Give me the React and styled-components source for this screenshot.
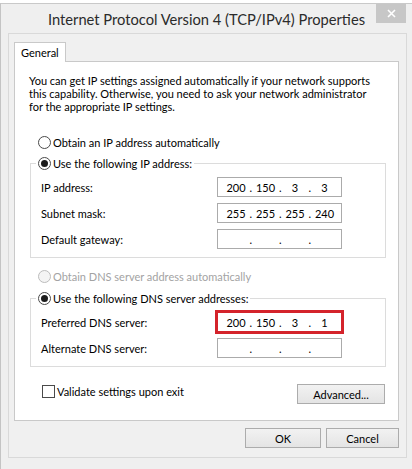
import React from "react";
import styled, { createGlobalStyle } from "styled-components";

const GlobalStyle = createGlobalStyle`
  html, body {
    margin: 0;
    padding: 0;
    background: #ffffff;
  }
  body {
    font-family: Lato, "Liberation Sans", sans-serif;
    font-size: 11px;
    color: #000;
  }
`;

const Window = styled.div`
  box-sizing: border-box;
  width: 412px;
  height: 466px;
  margin-top: 3px;
  background: #efefef;
  border-top: 1px solid #c9c9c9;
  border-left: 1px solid #c4c4c4;
  display: flex;
  flex-direction: column;
`;

const TitleBar = styled.div`
  height: 29px;
  display: grid;
  grid-template-columns: 1fr auto 1fr;
  align-items: center;
`;

const Title = styled.div`
  grid-column: 2;
  font-size: 14.7px;
  color: #2b2b2b;
  white-space: nowrap;
  padding-top: 1px;
`;

const CloseButton = styled.div`
  grid-column: 3;
  justify-self: end;
  align-self: start;
  width: 30px;
  height: 19px;
  margin-right: 6px;
  background: #c7c7c7;
  display: flex;
  align-items: center;
  justify-content: center;
`;

const Client = styled.div`
  box-sizing: border-box;
  height: 425px;
  margin: 0 5px 0 7px;
  padding: 8px 7px 0 5px;
  background: #f0f0f0;
  border: 1px solid #d9d9d9;
  display: flex;
  flex-direction: column;
`;

const TabStrip = styled.div`
  display: flex;
`;

const Tab = styled.div`
  box-sizing: border-box;
  height: 20px;
  margin-bottom: -1px;
  padding: 3px 6px 0 6px;
  background: #fff;
  border: 1px solid #c9c9c9;
  border-bottom: none;
  position: relative;
  z-index: 1;
`;

const Panel = styled.div`
  box-sizing: border-box;
  height: 360px;
  background: #fff;
  border: 1px solid #c9c9c9;
  display: flex;
  flex-direction: column;
`;

const Intro = styled.p`
  margin: 0;
  padding: 12px 14px 0 14px;
  line-height: 13px;
`;

const OptionRow = styled.label`
  display: flex;
  align-items: center;
  height: 16px;
  margin: ${(p) => p.$mt || 0}px 0 0 ${(p) => p.$ml || 0}px;
  color: ${(p) => (p.$disabled ? "#a3a3a3" : "#000")};
  gap: 2px;
  white-space: nowrap;
`;

const Radio = styled.span`
  box-sizing: border-box;
  width: 13px;
  height: 13px;
  border-radius: 50%;
  border: 1px solid ${(p) => (p.$disabled ? "#bcbcbc" : "#4a4a4a")};
  background: ${(p) => (p.$disabled ? "#f4f4f4" : "#fff")};
  display: flex;
  align-items: center;
  justify-content: center;
  flex: none;

  &::after {
    content: "";
    width: 7px;
    height: 7px;
    border-radius: 50%;
    background: #1b1b1b;
    display: ${(p) => (p.$checked ? "block" : "none")};
  }
`;

const CheckBox = styled.span`
  box-sizing: border-box;
  width: 13px;
  height: 13px;
  border: 1px solid #4a4a4a;
  background: #fff;
  flex: none;
`;

const Group = styled.fieldset`
  box-sizing: border-box;
  width: 356px;
  margin: ${(p) => p.$mt || 0}px 0 0 15px;
  padding: 0;
  border: 1px solid #dcdcdc;
  min-inline-size: 0;
`;

const Legend = styled.legend`
  margin-left: 5px;
  padding: 0 2px;
`;

const Fields = styled.div`
  display: grid;
  grid-template-columns: 1fr 125px;
  row-gap: 6px;
  align-items: center;
  padding: 6px 43px 8px 10px;
`;

const FieldLabel = styled.span`
  white-space: nowrap;
`;

const IpBox = styled.div`
  box-sizing: border-box;
  height: 20px;
  padding-left: 5px;
  background: #fff;
  border: 1px solid ${(p) => (p.$marked ? "#d4232b" : "#ababab")};
  box-shadow: ${(p) => (p.$marked ? "0 0 0 2px #d4232b" : "none")};
  display: flex;
  align-items: center;
`;

const Octet = styled.span`
  width: 26px;
  text-align: center;
  flex: none;
`;

const Dot = styled.span`
  width: 3.5px;
  flex: none;
  display: flex;
  justify-content: center;
`;

const Footer = styled.div`
  display: flex;
  justify-content: space-between;
  align-items: flex-start;
  margin-top: 16px;
  padding: 0 13px 0 27px;
`;

const Button = styled.div`
  box-sizing: border-box;
  width: ${(p) => p.$w}px;
  height: 20px;
  margin-top: ${(p) => p.$mt || 0}px;
  background: linear-gradient(#f2f2f2, #e4e4e4);
  border: 1px solid #acacac;
  display: flex;
  align-items: center;
  justify-content: center;
  flex: none;
`;

const ButtonBar = styled.div`
  display: flex;
  justify-content: flex-end;
  gap: 5px;
  margin-top: 7px;
`;

function IpField({ value, marked }) {
  const parts = value ? value.split(".") : ["", "", "", ""];
  return (
    <IpBox $marked={marked}>
      {parts.map((p, i) => (
        <React.Fragment key={i}>
          {i > 0 && <Dot>.</Dot>}
          <Octet>{p}</Octet>
        </React.Fragment>
      ))}
    </IpBox>
  );
}

export default function App() {
  return (
    <>
      <GlobalStyle />
      <Window>
        <TitleBar>
          <Title>Internet Protocol Version 4 (TCP/IPv4) Properties</Title>
          <CloseButton>
            <svg width="9" height="9" viewBox="0 0 9 9">
              <path d="M1 1L8 8M8 1L1 8" stroke="#fff" strokeWidth="1.6" />
            </svg>
          </CloseButton>
        </TitleBar>
        <Client>
          <TabStrip>
            <Tab>General</Tab>
          </TabStrip>
          <Panel>
            <Intro>
              You can get IP settings assigned automatically if your network supports
              <br />
              this capability. Otherwise, you need to ask your network administrator
              <br />
              for the appropriate IP settings.
            </Intro>

            <OptionRow $mt={21} $ml={23}>
              <Radio />
              Obtain an IP address automatically
            </OptionRow>

            <Group $mt={5}>
              <Legend>
                <OptionRow>
                  <Radio $checked />
                  Use the following IP address:
                </OptionRow>
              </Legend>
              <Fields>
                <FieldLabel>IP address:</FieldLabel>
                <IpField value="200.150.3.3" />
                <FieldLabel>Subnet mask:</FieldLabel>
                <IpField value="255.255.255.240" />
                <FieldLabel>Default gateway:</FieldLabel>
                <IpField />
              </Fields>
            </Group>

            <OptionRow $mt={10} $ml={23} $disabled>
              <Radio $disabled />
              Obtain DNS server address automatically
            </OptionRow>

            <Group $mt={6}>
              <Legend>
                <OptionRow>
                  <Radio $checked />
                  Use the following DNS server addresses:
                </OptionRow>
              </Legend>
              <Fields>
                <FieldLabel>Preferred DNS server:</FieldLabel>
                <IpField value="200.150.3.1" marked />
                <FieldLabel>Alternate DNS server:</FieldLabel>
                <IpField />
              </Fields>
            </Group>

            <Footer>
              <OptionRow>
                <CheckBox />
                Validate settings upon exit
              </OptionRow>
              <Button $w={88} $mt={1}>Advanced...</Button>
            </Footer>
          </Panel>
          <ButtonBar>
            <Button $w={76}>OK</Button>
            <Button $w={73}>Cancel</Button>
          </ButtonBar>
        </Client>
      </Window>
    </>
  );
}
